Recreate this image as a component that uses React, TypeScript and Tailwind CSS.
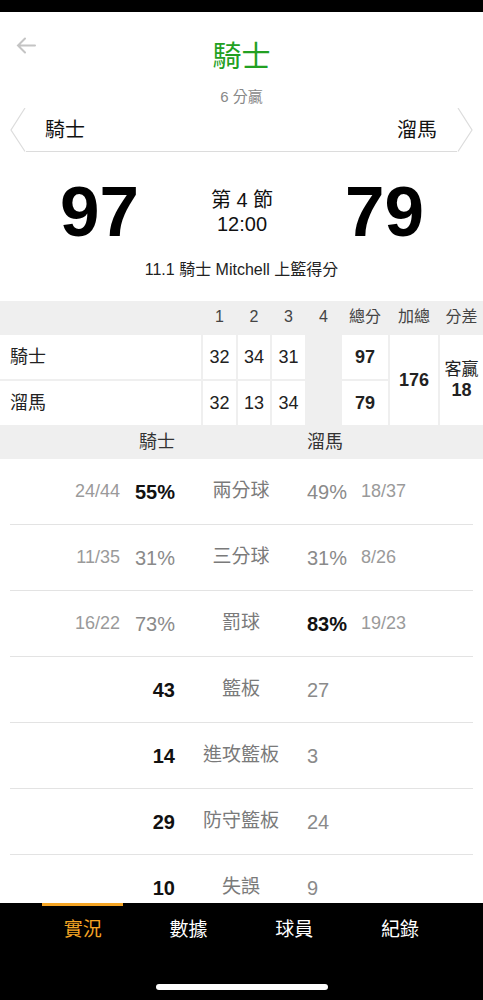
import { ReactNode } from 'react';

const font = 'font-["Liberation_Sans","Noto_Sans_CJK_TC",sans-serif]';

type Stat = {
  label: string;
  home: string;
  away: string;
  homeFrac?: string;
  awayFrac?: string;
  lead?: 'home' | 'away';
};

const stats: Stat[] = [
  { label: '兩分球', homeFrac: '24/44', home: '55%', away: '49%', awayFrac: '18/37', lead: 'home' },
  { label: '三分球', homeFrac: '11/35', home: '31%', away: '31%', awayFrac: '8/26' },
  { label: '罰球', homeFrac: '16/22', home: '73%', away: '83%', awayFrac: '19/23', lead: 'away' },
  { label: '籃板', home: '43', away: '27', lead: 'home' },
  { label: '進攻籃板', home: '14', away: '3', lead: 'home' },
  { label: '防守籃板', home: '29', away: '24', lead: 'home' },
  { label: '失誤', home: '10', away: '9', lead: 'home' },
];

const tabs = ['實況', '數據', '球員', '紀錄'];

function Cell({ children, className = '' }: { children?: ReactNode; className?: string }) {
  return <div className={`flex items-center justify-center ${className}`}>{children}</div>;
}

function ScoreTable() {
  return (
    <div className="grid grid-cols-[201px_33px_32px_33px_33px_46px_48px_43px] grid-rows-[32px_44px_44px] gap-[2px] bg-[#efefef] text-[18px] text-[#222]">
      <div />
      <Cell className="text-[16px] text-[#444]">1</Cell>
      <Cell className="text-[16px] text-[#444]">2</Cell>
      <Cell className="text-[16px] text-[#444]">3</Cell>
      <Cell className="text-[16px] text-[#444]">4</Cell>
      <Cell className="text-[16px] text-[#444]">總分</Cell>
      <Cell className="text-[16px] text-[#444]">加總</Cell>
      <Cell className="text-[16px] text-[#444]">分差</Cell>

      <div className="flex items-center bg-white pl-[10px]">騎士</div>
      <Cell className="bg-white">32</Cell>
      <Cell className="bg-white">34</Cell>
      <Cell className="bg-white">31</Cell>
      <div />
      <Cell className="bg-white font-bold">97</Cell>
      <Cell className="row-span-2 bg-white font-bold">176</Cell>
      <div className="row-span-2 flex flex-col items-center justify-center bg-white leading-[20px]">
        <span className="text-[17px]">客贏</span>
        <span className="font-bold">18</span>
      </div>

      <div className="flex items-center bg-white pl-[10px]">溜馬</div>
      <Cell className="bg-white">32</Cell>
      <Cell className="bg-white">13</Cell>
      <Cell className="bg-white">34</Cell>
      <div />
      <Cell className="bg-white font-bold">79</Cell>
    </div>
  );
}

function StatRow({ s }: { s: Stat }) {
  const strong = 'font-bold text-[#111]';
  const weak = 'text-[#8a8a8a]';
  return (
    <div className="mx-[10px] grid h-[66px] grid-cols-[165px_132px_1fr] items-center border-b border-[#e3e3e3] text-[19px]">
      <div className="flex items-center justify-end gap-[15px]">
        {s.homeFrac && <span className="text-[18px] text-[#9a9a9a]">{s.homeFrac}</span>}
        <span className={`text-[20px] ${s.lead === 'home' ? strong : weak}`}>{s.home}</span>
      </div>
      <div className="text-center text-[#7a7a7a]">{s.label}</div>
      <div className="flex items-center gap-[14px]">
        <span className={`text-[20px] ${s.lead === 'away' ? strong : weak}`}>{s.away}</span>
        {s.awayFrac && <span className="text-[18px] text-[#9a9a9a]">{s.awayFrac}</span>}
      </div>
    </div>
  );
}

export default function App() {
  return (
    <div className={`flex h-[1000px] w-[483px] flex-col overflow-hidden bg-white ${font}`}>
      <div className="h-3 shrink-0 bg-black" />

      <main className="flex-1 overflow-hidden">
        <div className="grid grid-cols-[60px_1fr_60px] pt-[25px]">
          <div className="pl-[16px]">
            <svg width="20" height="17" viewBox="0 0 20 17" fill="none" stroke="#c4c4c4" strokeWidth="2" strokeLinecap="round">
              <path d="M19 8.5H2M9 1.5L2 8.5L9 15.5" />
            </svg>
          </div>
          <div className="text-center text-[29px] leading-[40px] text-[#22a022]">騎士</div>
          <div />
        </div>
        <div className="mt-[9px] text-center text-[15px] leading-[22px] text-[#888]">6 分贏</div>

        <div className="flex h-[44px] px-[10px]">
          <svg width="16" height="44" viewBox="0 0 16 44" fill="none" stroke="#dcdcdc" strokeWidth="1.2">
            <path d="M15 0L1 22L15 43.5" />
          </svg>
          <div className="flex flex-1 items-center justify-between border-b border-[#dcdcdc] pl-[19px] pr-[20px] text-[20px] text-[#111]">
            <span>騎士</span>
            <span>溜馬</span>
          </div>
          <svg width="16" height="44" viewBox="0 0 16 44" fill="none" stroke="#dcdcdc" strokeWidth="1.2">
            <path d="M1 0L15 22L1 43.5" />
          </svg>
        </div>

        <div className="mt-[24px] flex items-center justify-between pl-[60px] pr-[59px] text-[#000]">
          <span className="text-[71px] font-bold leading-none">97</span>
          <div className="text-center text-[20px] leading-[24px] text-[#111]">
            <div>第 4 節</div>
            <div>12:00</div>
          </div>
          <span className="text-[71px] font-bold leading-none">79</span>
        </div>

        <div className="mt-[12px] text-center text-[16px] leading-[22px] text-[#222]">11.1 騎士 Mitchell 上籃得分</div>

        <div className="mt-[20px]">
          <ScoreTable />
          <div className="grid h-[34px] grid-cols-[175px_132px_1fr] items-center bg-[#efefef] text-[18px] text-[#333]">
            <span className="text-right">騎士</span>
            <span />
            <span>溜馬</span>
          </div>
        </div>

        <div>
          {stats.map((s) => (
            <StatRow key={s.label} s={s} />
          ))}
        </div>
      </main>

      <nav className="flex h-[97px] shrink-0 flex-col bg-black">
        <div className="flex px-[30px]">
          {tabs.map((t, i) => (
            <div key={t} className="flex flex-1 flex-col items-center">
              <div className={`h-[3px] w-[81px] ${i === 0 ? 'bg-[#f5a524]' : ''}`} />
              <span className={`mt-[12px] text-[19px] leading-[24px] ${i === 0 ? 'text-[#f5a524]' : 'text-white'}`}>{t}</span>
            </div>
          ))}
        </div>
        <div className="mx-auto mt-auto mb-[10px] h-[6px] w-[172px] rounded-full bg-white" />
      </nav>
    </div>
  );
}
